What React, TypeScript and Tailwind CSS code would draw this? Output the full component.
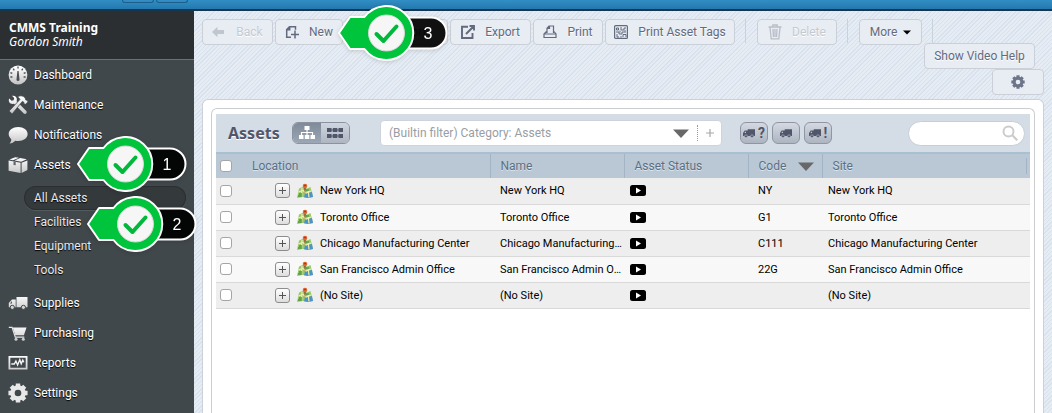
import { useId, useState } from "react";
import type { ReactNode } from "react";

interface AssetRow {
  id: string;
  location: string;
  name: string;
  code: string;
  site: string;
}

const rows: AssetRow[] = [
  { id: "ny", location: "New York HQ", name: "New York HQ", code: "NY", site: "New York HQ" },
  { id: "to", location: "Toronto Office", name: "Toronto Office", code: "G1", site: "Toronto Office" },
  { id: "ch", location: "Chicago Manufacturing Center", name: "Chicago Manufacturing Center", code: "C111", site: "Chicago Manufacturing Center" },
  { id: "sf", location: "San Francisco Admin Office", name: "San Francisco Admin Office", code: "22G", site: "San Francisco Admin Office" },
  { id: "none", location: "(No Site)", name: "(No Site)", code: "", site: "(No Site)" },
];

const TOOTH_ANGLES = [0, 45, 90, 135];

function Gear({ className, fill }: { className?: string; fill: string }) {
  return (
    <svg viewBox="0 0 18 18" className={className} aria-hidden="true">
      {TOOTH_ANGLES.map(a => (
        <path key={a} transform={`rotate(${a} 9 9)`} d="M7 .4h4v4H7zM7 13.6h4v4H7z" fill={fill} />
      ))}
      <circle cx="9" cy="9" r="5" fill="none" stroke={fill} strokeWidth="4" />
    </svg>
  );
}

// Sidebar glyphs share a white to grey fade
function NavIcon({ children }: { children: (fill: string) => ReactNode }) {
  const id = useId();
  return (
    <svg viewBox="0 0 20 20" className="w-5 h-5 shrink-0" aria-hidden="true">
      <defs>
        <linearGradient id={id} x1="0" y1="0" x2="0" y2="20" gradientUnits="userSpaceOnUse">
          <stop offset="0.1" stopColor="#ffffff" />
          <stop offset="0.95" stopColor="#c4c4c4" />
        </linearGradient>
      </defs>
      {children(`url(#${id})`)}
    </svg>
  );
}

const DashboardIcon = () => (
  <NavIcon>
    {fill => (
      <>
        <circle cx="10" cy="10" r="9.4" fill={fill} />
        <path d="M9.4 6h1.2l.9 8.6a1.5 1.5 0 0 1-3 0z" fill="#4a5055" />
        <path d="M10 1.6v2M5.2 3.6l1.1 1.7M14.8 3.6l-1.1 1.7M2.4 7.6l1.9.8M17.6 7.6l-1.9.8M2.4 12h2M17.6 12h-2" stroke="#4a5055" strokeWidth="1.3" />
      </>
    )}
  </NavIcon>
);

const MaintenanceIcon = () => (
  <NavIcon>
    {fill => (
      <>
        <path d="M4 .8 6.2 3 5.7 5.2 3.5 5.7 1.2 3.5C0 6 1.500 9 4.700 9L6 8.700 15.800 18.600c1.600 1.400 3.900-.8 2.500-2.500L8.600 6.200l.3-1.500C9 1.800 6.500.2 4 .8z" fill={fill} />
        <path d="M9.600 2C12 .1 15.200.6 17.200 3.100l.6 1.900 1.500.3.700 1.600-2.500 2.400-1.600-.5-.2-1.700-1.300-.7L4.100 18.900 1.100 16.100 11.900 4.500C11.400 3.300 10.600 2.600 9.600 2z" fill={fill} stroke="#41484c" strokeWidth="0.8" />
      </>
    )}
  </NavIcon>
);

const NotificationsIcon = () => (
  <NavIcon>
    {fill => <path d="M10.200 2C15.600 2 19.600 5 19.600 9s-4 7-9.400 7c-1 0-2-.1-2.900-.3C5.700 17.400 3.800 18.300 1.600 18.400c1.100-1.100 1.700-2.400 1.700-4.200C1.700 12.900.7 11 .7 9c0-4 4.100-7 9.500-7z" fill={fill} />}
  </NavIcon>
);

const AssetsIcon = () => (
  <NavIcon>
    {fill => (
      <>
        <path d="M.6 5.600 12.600 7.800V18L.6 15.800zM13.600 7.800 19.400 5.400V15L13.600 18z" fill={fill} />
        <path d="M1.400 4.600 7.200 2.200 11 2.800 5 5.300zM12.200 3l6.600 1.300-5.600 2.400-6.600-1.200z" fill={fill} />
        <path d="M5.500 6.500v3.400l2.200.4V6.900z" fill="#60676b" />
      </>
    )}
  </NavIcon>
);

const SuppliesIcon = () => (
  <NavIcon>
    {fill => (
      <>
        <path d="M8.500 4h11v10.200h-11zM4 6.600h3.700v7.600H.8v-4.300z" fill={fill} />
        <path d="M3.900 7.900v2.500H2z" fill="#41484c" />
        <circle cx="4.300" cy="14.400" r="2.100" fill={fill} stroke="#41484c" />
        <circle cx="15.400" cy="14.400" r="2.100" fill={fill} stroke="#41484c" />
      </>
    )}
  </NavIcon>
);

const PurchasingIcon = () => (
  <NavIcon>
    {fill => (
      <>
        <path d="M4.800 4.600h13.700l-2.600 7.600H7.300z" fill={fill} />
        <path d="M.8 4.300h3.300L7.300 14.200h9" fill="none" stroke="#e6e6e6" strokeWidth="1.200" />
        <circle cx="8" cy="16.200" r="1.500" fill={fill} />
        <circle cx="15.300" cy="16.200" r="1.500" fill={fill} />
      </>
    )}
  </NavIcon>
);

const ReportsIcon = () => (
  <NavIcon>
    {fill => (
      <>
        <path fillRule="evenodd" d="M.5 3h19v13.600H.5zM2.300 4.800v10h15.400v-10z" fill={fill} />
        <path d="M3.300 11h3l1.600-3 1.700 4 2.200-5.200 1.400 4 1.600-3.600 1 2" fill="none" stroke="#f3f3f3" strokeWidth="1.400" />
      </>
    )}
  </NavIcon>
);

// Numbered green pointer used to walk through the steps
function StepMarker({ step, className }: { step: number; className: string }) {
  return (
    <svg viewBox="0 0 116 60" className={`absolute z-20 w-[116px] h-[60px] pointer-events-none drop-shadow-sm ${className}`} role="img" aria-label={`Step ${step}`}>
      <path d="M50 14.500H95a15.500 15.500 0 0 1 0 31H50z" fill="#000" fillOpacity="0.920" stroke="#fff" strokeWidth="2" />
      <path d="M3 30 14 14h14.500A27 27 0 1 1 28.500 46H14z" fill="#00c43c" stroke="#fff" strokeWidth="2" strokeLinejoin="round" />
      <circle cx="50.500" cy="30" r="18" fill="#f6f6f6" stroke="#d5d8d5" strokeWidth="1" />
      <path d="m40.500 31 7 7 13-14.500" fill="none" stroke="#00b83a" strokeWidth="4" strokeLinecap="round" strokeLinejoin="round" />
      <text x="92" y="36" textAnchor="middle" fill="#fff" fontSize="16" fontFamily="'Liberation Sans', sans-serif">{step}</text>
    </svg>
  );
}

function NavItem({ icon, label, children }: { icon: ReactNode; label: string; children?: ReactNode }) {
  return (
    <li className="relative">
      <a href="#" className="flex items-center gap-1.5 h-[30px] pl-2 text-xs text-white [text-shadow:0_1px_1px_#000]">{icon}{label}</a>
      {children}
    </li>
  );
}

const subLink = "flex items-center h-6 pl-2.5";

function Sidebar() {
  return (
    <aside className="relative z-10 w-[194px] shrink-0 bg-[#41484c]">
      <div className="h-[49px] pt-2.5 pl-[9px] bg-[#2b2f31] border-b border-[#6c7173] font-['Noto_Sans',sans-serif] text-xs leading-[14px] text-white">
        <p className="font-bold">CMMS Training</p>
        <p className="italic">Gordon Smith</p>
      </div>
      <nav>
        <ul>
          <NavItem icon={<DashboardIcon />} label="Dashboard" />
          <NavItem icon={<MaintenanceIcon />} label="Maintenance" />
          <NavItem icon={<NotificationsIcon />} label="Notifications" />
          <NavItem icon={<AssetsIcon />} label="Assets">
            <StepMarker step={1} className="left-[75px] -top-4" />
          </NavItem>
        </ul>
        <ul className="pt-1.5 pb-1.5 pl-6 pr-2 text-xs text-[#e9eaeb] [text-shadow:0_1px_1px_#000]">
          <li>
            <a href="#" className={`${subLink} rounded-full bg-[#34393c] inset-ring inset-ring-[#2b2f32] shadow-[0_1px_0_#545b5f]`}>All Assets</a>
          </li>
          <li className="relative">
            <a href="#" className={subLink}>Facilities</a>
            <StepMarker step={2} className="left-[61px] -top-4" />
          </li>
          <li><a href="#" className={subLink}>Equipment</a></li>
          <li><a href="#" className={subLink}>Tools</a></li>
        </ul>
        <ul>
          <NavItem icon={<SuppliesIcon />} label="Supplies" />
          <NavItem icon={<PurchasingIcon />} label="Purchasing" />
          <NavItem icon={<ReportsIcon />} label="Reports" />
          <NavItem icon={<Gear className="w-5 h-5 shrink-0" fill="#e8e8e8" />} label="Settings" />
        </ul>
      </nav>
    </aside>
  );
}

const toolButton = "flex items-center justify-center h-[26px] shrink-0 rounded border border-[#cbd0d8] bg-[#e8ecf3] text-xs text-[#626a7e] [text-shadow:0_1px_0_#fff] disabled:text-[#c5cad2]";

function ToolIcon({ children }: { children: ReactNode }) {
  return (
    <svg viewBox="0 0 14 14" className="w-3.5 h-3.5" fill="none" stroke="currentColor" strokeWidth="1.500" aria-hidden="true">
      {children}
    </svg>
  );
}

const Separator = () => <span className="w-px h-6 ml-2 mr-[9px] bg-[#c9d1da]" />;

function Toolbar() {
  return (
    <div className="pl-2 pr-2 pt-2 pb-1">
      <div className="flex gap-0.5">
        <button disabled className={`${toolButton} w-[71px] gap-3`}>
          <svg viewBox="0 0 12 12" className="w-3 h-3" fill="#c0c6ce" aria-hidden="true"><path d="M0 6 5.500.8v3.200H12v4H5.500v3.200z" /></svg>
          Back
        </button>
        <div className="relative">
          <button className={`${toolButton} w-[68px] gap-2.5`}>
            <ToolIcon><path d="M6 12.300H1.700V4.500L4.500 1.700h6v3M4.700 1.700v3h-3M10 5.500v8M6 9.500h8" /></ToolIcon>
            New
          </button>
          <StepMarker step={3} className="left-[61px] -top-4" />
        </div>
        <button className={`${toolButton} w-[103px] gap-2.5`}>
          <ToolIcon><path d="M1 8v5h12V8M7 1v8M4 6l3 3 3-3" /></ToolIcon>
          Import
        </button>
        <button className={`${toolButton} w-[81px] gap-2.5`}>
          <ToolIcon><path d="M7 1.800H1V13h10.500V8M5 9l7-7M8.500 1H13v4.500" strokeWidth="1.900" /></ToolIcon>
          Export
        </button>
        <button className={`${toolButton} w-[70px] gap-2.5`}>
          <ToolIcon><path d="M4 8V3.200L6 1h4.500v7M4 3.500h2.500V1M3.500 6.500 1 9v3.500h12V9l-2-2.500M1 9h12" strokeWidth="1.200" /></ToolIcon>
          Print
        </button>
        <button className={`${toolButton} w-[130px] gap-2.5`}>
          <ToolIcon>
            <rect x=".6" y=".6" width="12.800" height="12.800" rx="1" strokeWidth="1.200" />
            <path d="M2.500 3h2v2h-2zM7 2v3h3V3h2M2 7h3v2h3V7h4M3 9v3h2M7 11v1.500M9 12V9.500h3V12M6 5.500v2M11 5v1.500" strokeWidth="1" />
          </ToolIcon>
          Print Asset Tags
        </button>
        <Separator />
        <button disabled className={`${toolButton} w-20 gap-2.5`}>
          <svg viewBox="0 0 14 16" className="w-3.5 h-4" fill="none" stroke="#b9bfc8" strokeWidth="1.300" aria-hidden="true">
            <path d="M.5 3h13M4.800 2.500V1h4.400v1.500M2 3.500l1.200 11.300h7.600L12 3.500M5 5l.5 8M9 5l-.5 8M7 5v8" />
          </svg>
          Delete
        </button>
        <Separator />
        <button className={`${toolButton} w-[63px] gap-1.5`}>
          More
          <svg viewBox="0 0 8 5" className="w-2 h-[5px]" fill="#000" aria-hidden="true"><path d="M0 .5h8L4 4.500z" /></svg>
        </button>
        <Separator />
      </div>
      <div className="-mt-0.5 flex flex-col items-end">
        <button className={`${toolButton} w-[111px] mr-[9px]`}>Show Video Help</button>
        <button className={`${toolButton} w-[52px]`} aria-label="Settings">
          <Gear className="w-3.5 h-3.5" fill="#6d7589" />
        </button>
      </div>
    </div>
  );
}

function TruckIcon() {
  return (
    <svg viewBox="0 0 14 12" className="w-3 h-3" aria-hidden="true">
      <path d="M5.500 1.500H14v8H0V6l2-3h3.500z" fill="#50576a" />
      <path d="M3.500 4v2h-2z" fill="#c5cbd5" />
      <circle cx="3.500" cy="9.800" r="1.700" fill="#50576a" stroke="#bac0ca" strokeWidth=".7" />
      <circle cx="10.500" cy="9.800" r="1.700" fill="#50576a" stroke="#bac0ca" strokeWidth=".7" />
    </svg>
  );
}

function MapIcon() {
  return (
    <svg viewBox="0 0 16 16" className="w-4 h-4 shrink-0" aria-hidden="true">
      <path d="M2 5.500 5.500 4l4.500 1.500L13.500 4 16 14l-5 1-5-1-6 1z" fill="#9bc969" />
      <path d="M8 10.500 15 9l1 5-5 1-4-.8z" fill="#4c93c9" />
      <path d="M1.500 9 6 7.500 9 10l5-2M5 5 4.500 14M11 6l1 8.500" fill="none" stroke="#f0eeb0" strokeWidth="1.200" />
      <path d="M2 11h3M9 7h3M1 13h4" stroke="#4f9448" strokeWidth="1.400" />
      <path d="M8 11.500 7.300 5h1.400z" fill="#8a3d20" />
      <circle cx="8" cy="3" r="2.300" fill="#dc6834" />
      <circle cx="8" cy="2.600" r=".8" fill="#7d3820" />
    </svg>
  );
}

const smallButton = "flex items-center justify-center gap-[3px] w-7 h-[22px] rounded-md border border-[#8e96a3] bg-linear-to-b from-[#d4d9e1] to-[#adb5c1] text-sm leading-none font-bold text-[#50576a]";

function PanelHeader() {
  const [hierarchy, setHierarchy] = useState(true);

  return (
    <div className="flex items-center h-10 pl-3 pr-[5px] bg-[#d4dce6] border-b-2 border-b-[#a9c0d2]">
      <h1 className="w-16 shrink-0 font-['Noto_Sans',sans-serif] text-base font-bold text-[#50576a] [text-shadow:0_1px_0_#fff]">Assets</h1>
      <div className="flex shrink-0 h-[22px] w-[58px] rounded-md border border-[#8a939f] overflow-hidden">
        <button aria-label="Tree view" aria-pressed={hierarchy} onClick={() => setHierarchy(true)} className="flex flex-1 items-center justify-center bg-linear-to-b from-[#7f8b99] to-[#9ba7b5]">
          <svg viewBox="0 0 16 14" className="w-4 h-3.5" fill="#fff" aria-hidden="true">
            <path d="M5.500 0h5v4h-5zM0 9h4.500v4H0zM5.800 9h4.500v4H5.800zM11.500 9H16v4h-4.500z" />
            <path d="M8 4v5M2.500 9V6.500h11V9" fill="none" stroke="#fff" strokeWidth="1.200" />
          </svg>
        </button>
        <button aria-label="List view" aria-pressed={!hierarchy} onClick={() => setHierarchy(false)} className="flex flex-1 items-center justify-center bg-linear-to-b from-[#d0d6df] to-[#aeb6c2]">
          <svg viewBox="0 0 16 12" className="w-4 h-3" fill="#50576a" aria-hidden="true">
            <path d="M0 1h4.500v4H0zM5.800 1h4.500v4H5.800zM11.500 1H16v4h-4.500zM0 7h4.500v4H0zM5.800 7h4.500v4H5.800zM11.500 7H16v4h-4.500zM0 2.500h16v1H0zM0 8.500h16v1H0z" />
          </svg>
        </button>
      </div>
      <div className="relative flex items-center shrink-0 w-[342px] h-[26px] ml-[30px] rounded border border-[#cdd4dd] bg-white">
        <select aria-label="Filter" className="appearance-none flex-1 h-full pl-2 text-xs text-[#9a9da3] bg-transparent outline-none">
          <option>(Builtin filter) Category: Assets</option>
        </select>
        <svg viewBox="0 0 16 9" className="absolute right-8 top-2 w-4 h-[9px] pointer-events-none" fill="#686868" aria-hidden="true"><path d="M0 .5h16L8 9z" /></svg>
        <button aria-label="Add filter" className="flex items-center justify-center w-6 h-4 border-l border-dotted border-[#9a9a9a] text-[#a8a8a8]">
          <svg viewBox="0 0 8 8" className="w-2 h-2" fill="currentColor" aria-hidden="true"><path d="M3.400 0h1.200v3.400H8v1.200H4.600V8H3.400V4.600H0V3.400h3.400z" /></svg>
        </button>
      </div>
      <div className="flex shrink-0 gap-1 ml-[18px]">
        <button className={smallButton}><TruckIcon />?</button>
        <button className={smallButton} aria-label="Online assets"><TruckIcon /></button>
        <button className={smallButton}><TruckIcon />!</button>
      </div>
      <div className="flex items-center w-[117px] h-[25px] ml-auto pl-3 pr-1.5 rounded-full border border-[#c6ced8] bg-white">
        <input type="search" aria-label="Search assets" className="flex-1 min-w-0 text-xs outline-none" />
        <svg viewBox="0 0 16 16" className="w-4 h-4 shrink-0" fill="none" stroke="#cccccc" aria-hidden="true">
          <circle cx="6.500" cy="6.500" r="5" strokeWidth="2" />
          <path d="m10.300 10.300 5 5" strokeWidth="2.200" />
        </svg>
      </div>
    </div>
  );
}

const checkbox = "block appearance-none w-3 h-3 ml-1 rounded-[3px] border border-[#a5a5a5] bg-white checked:bg-[#50576a]";
const headCell = "font-normal text-left border-r border-[#a3b5c5]";

function AssetsTable() {
  const [selected, setSelected] = useState<string[]>([]);
  const allSelected = selected.length === rows.length;

  const toggle = (id: string) => {
    setSelected(selected.includes(id) ? selected.filter(s => s !== id) : [...selected, id]);
  };

  return (
    <table className="w-full table-fixed border-collapse text-[11px] leading-[18px] text-black">
      <colgroup>
        <col className="w-7" />
        <col className="w-[246px]" />
        <col className="w-[134px]" />
        <col className="w-[124px]" />
        <col className="w-[74px]" />
        <col />
      </colgroup>
      <thead>
        <tr className="h-6 bg-[#bac8d5] text-xs text-[#5b6f84] [text-shadow:0_1px_0_#dbe5ed]">
          <th>
            <input type="checkbox" aria-label="Select all" className={checkbox} checked={allSelected} onChange={() => setSelected(allSelected ? [] : rows.map(r => r.id))} />
          </th>
          <th className={`${headCell} pl-2`}>Location</th>
          <th className={`${headCell} pl-2.5`}>Name</th>
          <th className={`${headCell} pl-2.5`}>Asset Status</th>
          <th className={`${headCell} pl-2.5`}>
            <div className="flex items-center gap-3">
              Code
              <svg viewBox="0 0 16 9" className="w-4 h-[9px]" fill="#686868" aria-hidden="true"><path d="M0 .5h16L8 9z" /></svg>
            </div>
          </th>
          <th className="font-normal text-left pl-2.5">
            <div className="mr-[3px] border-r border-[#a3b5c5]">Site</div>
          </th>
        </tr>
      </thead>
      <tbody>
        {rows.map(r => (
          <tr key={r.id} className="h-[26px] border-b border-[#d9d9d9] odd:bg-[#eeeeee] even:bg-[#f8f8f8]">
            <td>
              <input type="checkbox" aria-label={`Select ${r.location}`} className={checkbox} checked={selected.includes(r.id)} onChange={() => toggle(r.id)} />
            </td>
            <td className="pl-[31px]">
              <div className="flex items-center gap-[7px] whitespace-nowrap">
                <button aria-label={`Expand ${r.location}`} className="flex items-center justify-center w-[15px] h-[15px] rounded-[3px] border border-[#8c8c8c] bg-linear-to-b from-white to-[#dddddd]">
                  <svg viewBox="0 0 9 9" className="w-[9px] h-[9px]" stroke="#555" aria-hidden="true"><path d="M4.500 1v7M1 4.500h7" /></svg>
                </button>
                <MapIcon />
                <span className="pt-px">{r.location}</span>
              </div>
            </td>
            <td className="pt-px pl-2.5 truncate">{r.name}</td>
            <td className="pl-1.5">
              <svg viewBox="0 0 16 11" className="w-4 h-[11px]" role="img" aria-label="Online">
                <rect width="16" height="11" rx="2.500" />
                <path d="M6 2.500v6l5-3z" fill="#fff" />
              </svg>
            </td>
            <td className="pt-px pl-2.5">{r.code}</td>
            <td className="pt-px pl-1.5 truncate">{r.site}</td>
          </tr>
        ))}
      </tbody>
    </table>
  );
}

export default function App() {
  return (
    <div className="flex flex-col min-h-screen font-['Roboto',sans-serif] bg-[#e4ebf2]">
      <header className="flex items-start gap-0.5 h-[11px] pl-[122px] bg-linear-to-b from-[#318ec5] to-[#2479ae] border-b-2 border-[#17364f]">
        <span className="w-8 h-[3px] rounded-b border border-t-0 border-[#1c5f8d]" />
        <span className="w-8 h-[3px] rounded-b border border-t-0 border-[#1c5f8d]" />
      </header>
      <div className="flex flex-1">
        <Sidebar />
        <main className="flex flex-col flex-1 min-w-0 bg-[repeating-linear-gradient(135deg,#e6ecf3_0px,#e6ecf3_2px,#d9e2ec_2px,#d9e2ec_3px)]">
          <Toolbar />
          <section className="flex flex-col flex-1 mx-2 pt-2 px-2 rounded-t-md border border-b-0 border-[#cbd1d8] bg-white">
            <div className="flex-1 p-1 pt-[5px] rounded-t-md border border-b-0 border-[#cbcdd0]">
              <PanelHeader />
              <AssetsTable />
            </div>
          </section>
        </main>
      </div>
    </div>
  );
}
